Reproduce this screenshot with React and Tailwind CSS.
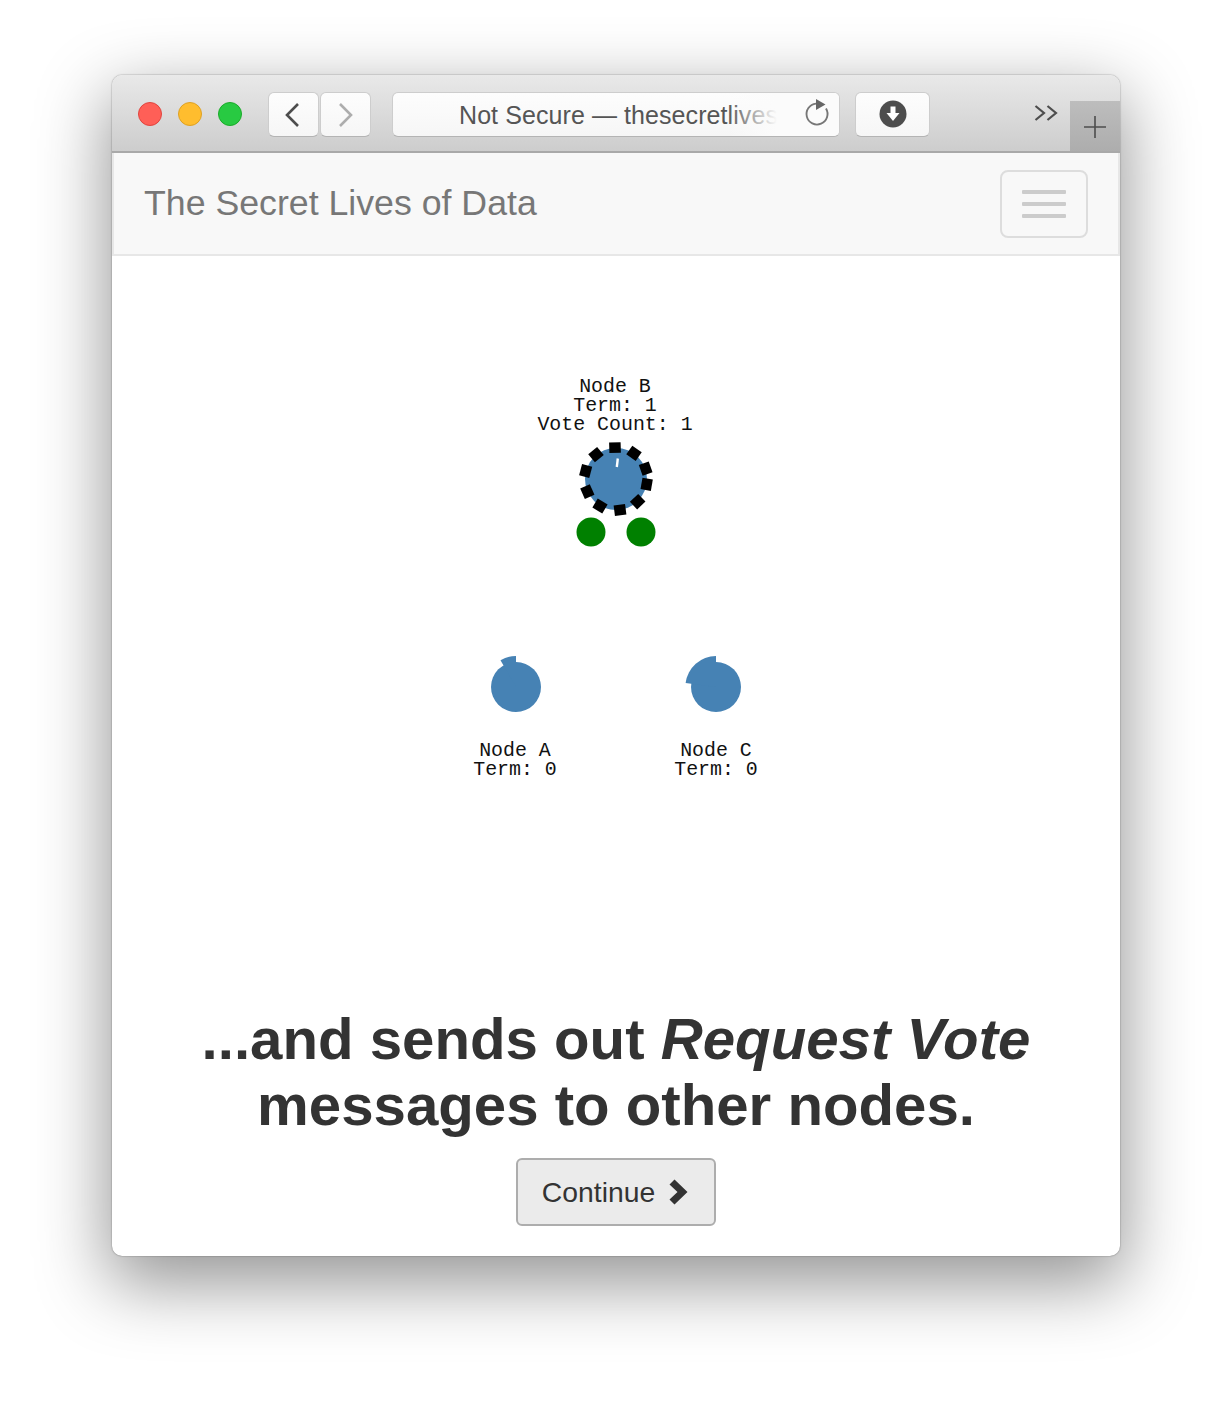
const FONT = { fontFamily: '"Liberation Sans", Arial, sans-serif' };

const DASHES = [
  [285, 233], [342, 250], [377, 296], [380, 343], [353, 395],
  [300, 420], [240, 408], [202, 365], [197, 303], [228, 254],
].map(([x, y]) => {
  const px = 520 + x / 3;
  const py = 370 + y / 3;
  const a = (Math.atan2(py - 479, px - 616) * 180) / Math.PI + 90;
  return { px, py, a };
});

function NodeLabel({ x, y, lines }) {
  return (
    <text x={x} y={y} textAnchor="middle" fontSize="19.9" fill="#111" fontFamily='"Liberation Mono", "Courier New", monospace' xmlSpace="preserve">
      {lines.map((l, i) => (
        <tspan key={i} x={x} y={y + i * 19}>{l}</tspan>
      ))}
    </text>
  );
}

function Diagram() {
  return (
    <svg width="1008" height="750" viewBox="112 256 1008 750" className="block">
      <circle cx="616" cy="479" r="31" fill="#4682b4" />
      {DASHES.map((d, i) => (
        <rect key={i} x={d.px - 5.75} y={d.py - 5.25} width="11.5" height="10.5" fill="#000" transform={`rotate(${d.a} ${d.px} ${d.py})`} />
      ))}
      <line x1="617.8" y1="458.5" x2="616.8" y2="467" stroke="#fff" strokeWidth="2.4" />
      <circle cx="591" cy="532" r="14.5" fill="#008000" />
      <circle cx="641" cy="532" r="14.5" fill="#008000" />
      <NodeLabel x={615} y={392.4} lines={["Node B", "Term: 1", "Vote Count: 1"]} />

      <circle cx="516" cy="687" r="25" fill="#4682b4" />
      <path d="M516 687 L516 656 A31 31 0 0 0 500.5 660.2 Z" fill="#4682b4" />
      <NodeLabel x={515} y={756.4} lines={["Node A", "Term: 0"]} />

      <circle cx="716" cy="687" r="25" fill="#4682b4" />
      <path d="M716 687 L716 656 A31 31 0 0 0 685.6 683 Z" fill="#4682b4" />
      <NodeLabel x={716} y={756.4} lines={["Node C", "Term: 0"]} />
    </svg>
  );
}

function ToolButton({ className, children }) {
  return (
    <div className={`h-[45px] flex items-center justify-center rounded-[6px] border border-[#cdcdcd] border-b-[#b4b4b4] bg-gradient-to-b from-[#fdfdfd] to-[#f6f6f6] ${className}`}>
      {children}
    </div>
  );
}

function Toolbar() {
  return (
    <div className="relative flex h-[78px] items-start rounded-t-[10px] border-b-2 border-[#a9a9a9] bg-gradient-to-b from-[#e9e9e9] to-[#cdcdcd]">
      <div className="mt-[27px] ml-[26px] flex gap-4">
        <div className="h-6 w-6 rounded-full border border-[#e0443e] bg-[#ff5f57]" />
        <div className="h-6 w-6 rounded-full border border-[#dea123] bg-[#ffbd2e]" />
        <div className="h-6 w-6 rounded-full border border-[#1aab29] bg-[#28ca42]" />
      </div>
      <div className="mt-[17px] ml-[26px] flex gap-[1px]">
        <ToolButton className="w-[51px]">
          <svg width="18" height="26" viewBox="0 0 18 26" className="-ml-[2px]"><path d="M14 2 L3 13 L14 24" fill="none" stroke="#4d4d4d" strokeWidth="2.6" /></svg>
        </ToolButton>
        <ToolButton className="w-[51px]">
          <svg width="18" height="26" viewBox="0 0 18 26" className="-ml-[2px]"><path d="M4 2 L15 13 L4 24" fill="none" stroke="#adadad" strokeWidth="2.6" /></svg>
        </ToolButton>
      </div>
      <ToolButton className="relative mt-[17px] ml-[21px] w-[449px] !justify-start overflow-hidden">
        <span className="mt-[1px] ml-[66px] whitespace-nowrap text-[25px] leading-none tracking-[0.08px] text-[#555]" style={FONT}>Not Secure — thesecretlives</span>
        <div className="absolute top-0 right-[62px] h-full w-[50px] bg-gradient-to-r from-[#fbfbfb00] to-[#fbfbfb]" />
        <div className="absolute top-0 right-0 flex h-full w-[62px] items-center justify-start bg-[#fbfbfb]">
          <svg width="26" height="30" viewBox="0 0 26 30" className="-mt-[1px] ml-[27px]">
            <path d="M12 4.6 A10.5 10.5 0 1 0 22 9.6" fill="none" stroke="#777" strokeWidth="1.9" />
            <path d="M12 0 L12 11 L21.5 5.5 Z" fill="#666" />
          </svg>
        </div>
      </ToolButton>
      <ToolButton className="mt-[17px] ml-[15px] w-[75px]">
        <svg width="28" height="28" viewBox="0 0 28 28" className="-mt-[1px]">
          <circle cx="14" cy="14" r="13.5" fill="#4d4d4d" />
          <path d="M11.5 6.5 H16.5 V13 H20.5 L14 21 L7.5 13 H11.5 Z" fill="#fff" />
        </svg>
      </ToolButton>
      <svg className="mt-[29px] ml-[104px]" width="24" height="18" viewBox="0 0 24 18">
        <path d="M1.5 2 L10 9 L1.5 16 M13.5 2 L22 9 L13.5 16" fill="none" stroke="#4d4d4d" strokeWidth="2.2" />
      </svg>
      <div className="mt-[26px] ml-[12px] flex h-[50px] w-[50px] items-center justify-center bg-gradient-to-b from-[#bdbdbd] to-[#adadad]">
        <svg width="24" height="24" viewBox="0 0 24 24" className="mt-[2px]">
          <path d="M12 1 V23 M1 12 H23" stroke="#4d4d4d" strokeWidth="1.6" />
        </svg>
      </div>
    </div>
  );
}

function Navbar() {
  return (
    <div className="flex h-[103px] items-center justify-between border-x-2 border-b-2 border-[#e7e7e7] bg-[#f8f8f8] pr-[30px] pl-[30px]">
      <span className="text-[35.7px] leading-none text-[#777]" style={FONT}>The Secret Lives of Data</span>
      <div className="flex h-[68px] w-[88px] flex-col items-center justify-center gap-2 rounded-lg border-2 border-[#ddd]">
        <div className="h-1 w-11 rounded-[1px] bg-[#ccc]" />
        <div className="h-1 w-11 rounded-[1px] bg-[#ccc]" />
        <div className="h-1 w-11 rounded-[1px] bg-[#ccc]" />
      </div>
    </div>
  );
}

export default function App() {
  return (
    <div className="h-[1404px] overflow-hidden bg-white pt-[75px] pl-[112px]">
      <div className="w-[1008px] rounded-[10px] bg-white shadow-[0_24px_70px_4px_rgba(0,0,0,0.42),0_0_1.5px_rgba(0,0,0,0.55)]">
        <Toolbar />
        <Navbar />
        <Diagram />
        <h1 className="text-center text-[58.2px] font-bold leading-[66px] text-[#333]" style={FONT}>
          ...and sends out <em className="italic">Request Vote</em>
          <br />
          messages to other nodes.
        </h1>
        <div className="mt-5 flex justify-center pb-[30px]">
          <div className="flex h-[68px] w-[200px] items-center justify-center gap-[13px] rounded-[6px] border-2 border-[#adadad] bg-[#ebebeb] text-[28.3px] text-[#333]" style={FONT}>
            Continue
            <svg width="22" height="26" viewBox="0 0 22 26">
              <path d="M6.5 0.5 L19.5 13 L6.5 25.5 L1.5 20.5 L9.5 13 L1.5 5.5 Z" fill="#333" />
            </svg>
          </div>
        </div>
      </div>
    </div>
  );
}
